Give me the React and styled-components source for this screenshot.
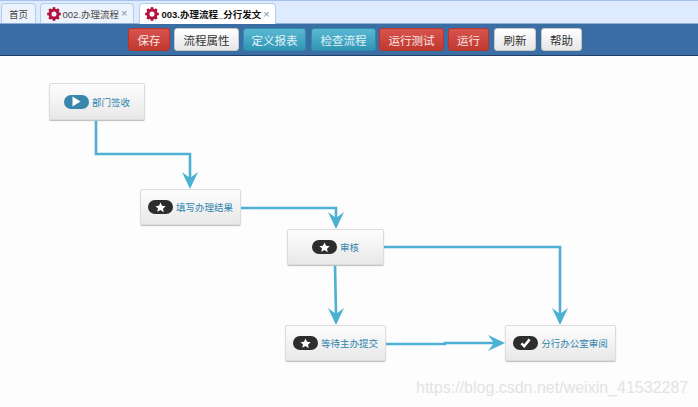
import React from 'react';
import styled, { createGlobalStyle } from 'styled-components';

const FONT = '"Liberation Sans", "Noto Sans CJK SC", sans-serif';

const GlobalStyle = createGlobalStyle`
  html, body {
    margin: 0;
    padding: 0;
    background: #fdfdfd;
    font-family: ${FONT};
    overflow: hidden;
  }
`;

const TABS = [
  { label: '首页', width: 35, gap: 4 },
  { label: '002.办理流程', width: 94, gap: 5, gear: true, close: true },
  { label: '003.办理流程_分行发文', width: 137, gap: 0, gear: true, close: true, active: true },
];

const BUTTONS = [
  { label: '保存', width: 42, kind: 'danger', gap: 4 },
  { label: '流程属性', width: 65, kind: 'plain', gap: 4 },
  { label: '定义报表', width: 63, kind: 'info', gap: 5 },
  { label: '检查流程', width: 65, kind: 'info', gap: 3 },
  { label: '运行测试', width: 65, kind: 'danger', gap: 4 },
  { label: '运行', width: 41, kind: 'danger', gap: 5 },
  { label: '刷新', width: 42, kind: 'plain', gap: 5 },
  { label: '帮助', width: 41, kind: 'plain', gap: 0 },
];

const NODES = [
  { label: '部门签收', x: 49, y: 83, w: 96, h: 37, icon: 'play' },
  { label: '填写办理结果', x: 140, y: 189, w: 101, h: 36, icon: 'star' },
  { label: '审核', x: 287, y: 229, w: 97, h: 36, icon: 'star' },
  { label: '等待主办提交', x: 285, y: 325, w: 101, h: 36, icon: 'star' },
  { label: '分行办公室审阅', x: 505, y: 325, w: 111, h: 36, icon: 'check' },
];

const EDGES = [
  { points: '96,120 96,154 190,154 190,178', tip: [190, 189], dir: 'down' },
  { points: '241,208 336,208 336,218', tip: [336, 229], dir: 'down' },
  { points: '384,247 560,247 560,314', tip: [560, 325], dir: 'down' },
  { points: '335,265 336,314', tip: [336, 325], dir: 'down' },
  { points: '386,344 445,344 445,343 494,343', tip: [505, 343], dir: 'right' },
];

const arrowHead = ({ tip: [x, y], dir }) =>
  dir === 'down'
    ? `${x},${y} ${x - 8},${y - 17} ${x},${y - 11} ${x + 8},${y - 17}`
    : `${x},${y} ${x - 17},${y - 8} ${x - 11},${y} ${x - 17},${y + 8}`;

// gear drawn as a ring with eight teeth
const GEAR_TEETH = [0, 45, 90, 135, 180, 225, 270, 315];

const Gear = () => (
  <GearIcon viewBox="0 0 16 16">
    <circle cx="8" cy="8" r="4.6" fill="none" stroke="#b3123f" strokeWidth="3.4" />
    {GEAR_TEETH.map((angle) => (
      <rect key={angle} x="6.5" y="0.2" width="3" height="3.4" fill="#b3123f" transform={`rotate(${angle} 8 8)`} />
    ))}
  </GearIcon>
);

const BadgeGlyph = ({ icon }) => {
  if (icon === 'play') {
    return (
      <svg width="10" height="11" viewBox="0 0 10 11">
        <path fill="#fff" d="M1.5 0.5 L9.5 5.5 L1.5 10.5 Z" />
      </svg>
    );
  }
  if (icon === 'check') {
    return (
      <svg width="11" height="10" viewBox="0 0 12 11">
        <path fill="none" stroke="#fff" strokeWidth="2.8" d="M1.5 6 L4.6 9 L10.5 1.5" />
      </svg>
    );
  }
  return (
    <svg width="11" height="11" viewBox="0 0 24 24">
      <path
        fill="#fff"
        d="M12 1l3.4 7.2 7.8 1-5.7 5.4 1.5 7.8L12 17.6l-7 3.8 1.5-7.8L.8 9.2l7.8-1z"
      />
    </svg>
  );
};

const App = () => (
  <Page>
    <GlobalStyle />
    <TabStrip>
      {TABS.map((tab) => (
        <Tab key={tab.label} $width={tab.width} $gap={tab.gap} $active={tab.active}>
          {tab.gear && <Gear />}
          <TabLabel $active={tab.active}>{tab.label}</TabLabel>
          {tab.close && <TabClose>×</TabClose>}
        </Tab>
      ))}
    </TabStrip>
    <Toolbar>
      {BUTTONS.map((btn) => (
        <ToolButton key={btn.label} $width={btn.width} $gap={btn.gap} $kind={btn.kind}>
          {btn.label}
        </ToolButton>
      ))}
    </Toolbar>
    <Canvas>
      <EdgeLayer width="698" height="352" viewBox="0 55 698 352">
        {EDGES.map((edge) => (
          <g key={edge.points}>
            <polyline points={edge.points} fill="none" stroke="#4cb1d2" strokeWidth="2.6" />
            <polygon points={arrowHead(edge)} fill="#4cb1d2" />
          </g>
        ))}
      </EdgeLayer>
      {NODES.map((node) => (
        <Node key={node.label} $x={node.x} $y={node.y - 55} $w={node.w} $h={node.h}>
          <Badge $play={node.icon === 'play'}>
            <BadgeGlyph icon={node.icon} />
          </Badge>
          <NodeLabel>{node.label}</NodeLabel>
        </Node>
      ))}
      <Watermark>https://blog.csdn.net/weixin_41532287</Watermark>
    </Canvas>
  </Page>
);

const Page = styled.div`
  width: 698px;
  height: 407px;
  display: flex;
  flex-direction: column;
  overflow: hidden;
`;

const TabStrip = styled.div`
  height: 24px;
  box-sizing: border-box;
  padding: 2px 0 0 1px;
  display: flex;
  align-items: flex-start;
  background: #deeafd;
  border-top: 1px solid #a3c0ee;
  border-bottom: 1px solid #8fb0d8;
`;

const Tab = styled.div`
  box-sizing: border-box;
  flex: none;
  width: ${(p) => p.$width}px;
  height: ${(p) => (p.$active ? 21 : 20)}px;
  margin-right: ${(p) => p.$gap}px;
  display: flex;
  align-items: center;
  justify-content: center;
  gap: 2px;
  background: ${(p) => (p.$active ? '#ffffff' : '#edf3fc')};
  border: 1px solid #b5cdec;
  border-bottom: none;
  border-radius: 4px 4px 0 0;
`;

const GearIcon = styled.svg`
  width: 14px;
  height: 14px;
  flex: none;
`;

const TabLabel = styled.span`
  font-size: 9.5px;
  white-space: nowrap;
  color: ${(p) => (p.$active ? '#111' : '#444')};
  font-weight: ${(p) => (p.$active ? 700 : 400)};
`;

const TabClose = styled.span`
  font-size: 11px;
  line-height: 1;
  color: #7f8ea3;
`;

const KINDS = {
  danger: { bg: 'linear-gradient(#d9534f, #c0392f)', border: '#b5362f', color: '#f7e6e4' },
  info: { bg: 'linear-gradient(#5bb8d3, #2f96b4)', border: '#2e8eab', color: '#e2f3f8' },
  plain: { bg: 'linear-gradient(#ffffff, #e6e6e6)', border: '#c8c8c8', color: '#333' },
};

const Toolbar = styled.div`
  height: 32px;
  box-sizing: border-box;
  padding: 4px 0 0 128px;
  display: flex;
  align-items: flex-start;
  background: #3b6ea5;
  border-bottom: 1px solid #1f3f66;
`;

const ToolButton = styled.div`
  box-sizing: border-box;
  flex: none;
  width: ${(p) => p.$width}px;
  height: 23px;
  margin-right: ${(p) => p.$gap}px;
  display: flex;
  align-items: center;
  justify-content: center;
  font-size: 11.5px;
  border-radius: 3px;
  background: ${(p) => KINDS[p.$kind].bg};
  border: 1px solid ${(p) => KINDS[p.$kind].border};
  color: ${(p) => KINDS[p.$kind].color};
`;

const Canvas = styled.div`
  flex: 1;
  position: relative;
  background: #fdfdfd;
`;

const EdgeLayer = styled.svg`
  position: absolute;
  left: 0;
  top: -1px;
`;

const Node = styled.div`
  position: absolute;
  left: ${(p) => p.$x}px;
  top: ${(p) => p.$y - 1}px;
  width: ${(p) => p.$w}px;
  height: ${(p) => p.$h}px;
  box-sizing: border-box;
  display: flex;
  align-items: center;
  justify-content: center;
  gap: 3px;
  background: linear-gradient(#fdfdfd, #e8e8e8);
  border: 1px solid #dcdcdc;
  border-radius: 2px;
  box-shadow: 0 1px 1px #bdbdbd;
`;

const Badge = styled.span`
  flex: none;
  width: 25px;
  height: 14px;
  border-radius: 7px;
  display: flex;
  align-items: center;
  justify-content: center;
  background: ${(p) => (p.$play ? '#3a87ad' : '#2d2d2d')};
`;

const NodeLabel = styled.span`
  font-size: 9.5px;
  white-space: nowrap;
  color: #2f83ad;
`;

const Watermark = styled.div`
  position: absolute;
  left: 416px;
  top: 323px;
  font-size: 16px;
  white-space: nowrap;
  color: #e3e3e3;
`;

export default App;
